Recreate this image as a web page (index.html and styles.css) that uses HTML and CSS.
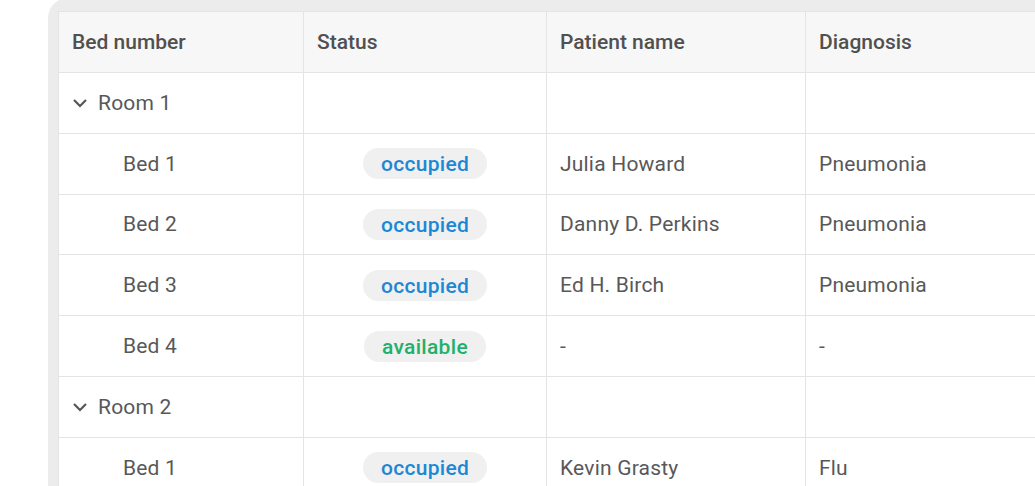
FILE: index.html
```html
<!DOCTYPE html>
<html>
<head>
<meta charset="utf-8">
<link rel="stylesheet" href="styles.css">
</head>
<body>
<div class="card">
  <table class="grid">
    <colgroup>
      <col class="c1"><col class="c2"><col class="c3"><col class="c4">
    </colgroup>
    <thead>
      <tr><th>Bed number</th><th>Status</th><th>Patient name</th><th>Diagnosis</th></tr>
    </thead>
    <tbody>
      <tr class="group">
        <td><span class="room"><svg class="chev" viewBox="0 0 16 16" width="16" height="16"><path d="M2 5 L8 11 L14 5" fill="none" stroke="#555" stroke-width="2.2"/></svg>Room 1</span></td>
        <td></td><td></td><td></td>
      </tr>
      <tr>
        <td class="bed">Bed 1</td>
        <td class="st"><span class="pill occ">occupied</span></td>
        <td>Julia Howard</td><td>Pneumonia</td>
      </tr>
      <tr>
        <td class="bed">Bed 2</td>
        <td class="st"><span class="pill occ">occupied</span></td>
        <td>Danny D. Perkins</td><td>Pneumonia</td>
      </tr>
      <tr>
        <td class="bed">Bed 3</td>
        <td class="st"><span class="pill occ">occupied</span></td>
        <td>Ed H. Birch</td><td>Pneumonia</td>
      </tr>
      <tr>
        <td class="bed">Bed 4</td>
        <td class="st"><span class="pill avail">available</span></td>
        <td>-</td><td>-</td>
      </tr>
      <tr class="group">
        <td><span class="room"><svg class="chev" viewBox="0 0 16 16" width="16" height="16"><path d="M2 5 L8 11 L14 5" fill="none" stroke="#555" stroke-width="2.2"/></svg>Room 2</span></td>
        <td></td><td></td><td></td>
      </tr>
      <tr>
        <td class="bed">Bed 1</td>
        <td class="st"><span class="pill occ">occupied</span></td>
        <td>Kevin Grasty</td><td>Flu</td>
      </tr>
    </tbody>
  </table>
</div>
</body>
</html>
```
FILE: styles.css
```css
html, body {
  margin: 0;
  padding: 0;
  background: #ffffff;
  overflow: hidden;
}
body {
  font-family: Roboto, "Liberation Sans", sans-serif;
  color: #585858;
  width: 1035px;
  height: 486px;
}
.card {
  margin: -2px 0 0 48px;
  padding: 13px 0 0 10px;
  width: 1100px;
  height: 600px;
  background: #ececec;
  border-radius: 20px;
}
.grid {
  border-collapse: collapse;
  table-layout: fixed;
  width: 1150px;
  background: #ffffff;
  font-size: 21px;
  letter-spacing: 0.2px;
}
.c1 { width: 245px; }
.c2 { width: 243px; }
.c3 { width: 259px; }
.c4 { width: 403px; }
.grid th, .grid td {
  border: 1px solid #e4e4e4;
  padding: 0 13px;
  text-align: left;
  white-space: nowrap;
}
.grid th {
  height: 60px;
  background: #f7f7f7;
  font-weight: 500;
  color: #505050;
  font-size: 21px;
  letter-spacing: 0;
}
.grid td {
  height: 59.8px;
}
.room {
  display: flex;
  align-items: center;
  gap: 10px;
}
.chev { flex: none; }
.grid td.bed { padding-left: 64px; }
.grid td.st { text-align: center; }
.pill {
  display: inline-block;
  height: 31px;
  line-height: 32px;
  padding: 0 18px;
  border-radius: 16px;
  background: #f0f0f0;
  font-weight: 500;
  letter-spacing: 0.3px;
}
.occ { color: #1b88d6; }
.avail { color: #22b06a; }
```
